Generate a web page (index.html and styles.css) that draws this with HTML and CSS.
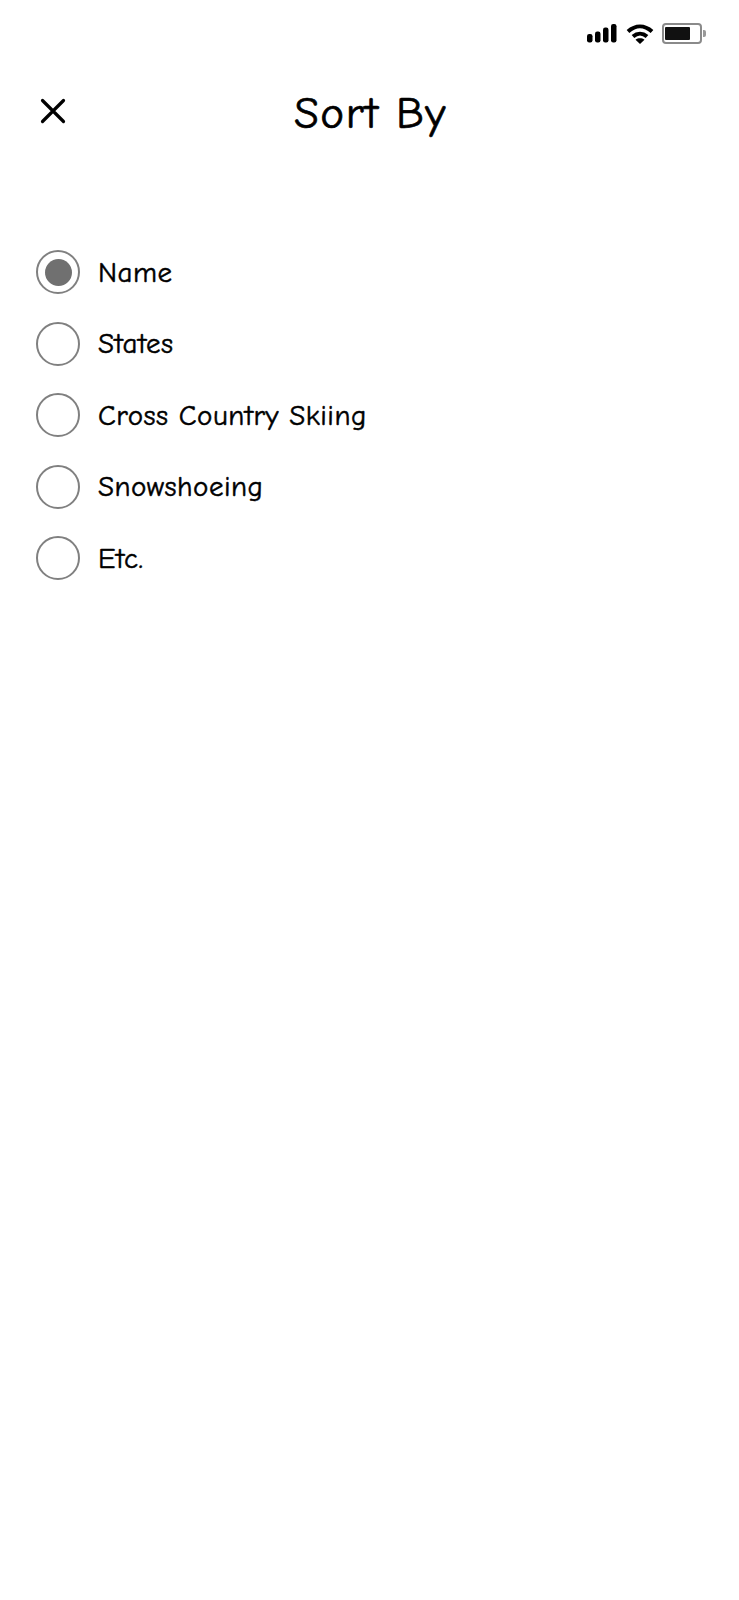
FILE: index.html
```html
<html>
	<head>
		<meta charset="utf-8">
		<link rel="stylesheet" href="styles.css">
	</head>
	<body>
		<div class="status">
			<svg class="signal" width="30" height="19" viewBox="0 0 30 19">
				<rect x="0" y="10" width="5.5" height="8.5" rx="2.2"/>
				<rect x="8" y="7.5" width="5.5" height="11" rx="2.2"/>
				<rect x="16" y="3.5" width="5.5" height="15" rx="2.2"/>
				<rect x="24" y="0" width="5.5" height="18.5" rx="2.2"/>
			</svg>
			<svg class="wifi" width="28" height="20" viewBox="0 0 28 20">
				<path d="M2 7.5C9.5 .8 18.500 .8 26 7.5" fill="none" stroke="#000" stroke-width="4"/>
				<path d="M7 12.500C11.300 8.700 16.700 8.700 21 12.500" fill="none" stroke="#000" stroke-width="4"/>
				<path d="M9.500 15.700L14 20L18.500 15.700C15.800 13.800 12.200 13.800 9.500 15.700Z"/>
			</svg>
			<div class="battery"><div class="charge"></div></div>
			<div class="nub"></div>
		</div>

		<div class="header">
			<svg class="close" width="26" height="26" viewBox="0 0 26 26">
				<path d="M2.500 2.500L23.500 23.500M23.500 2.500L2.500 23.500" fill="none" stroke="#000" stroke-width="3.2" stroke-linecap="round"/>
			</svg>
			<h1>Sort By</h1>
		</div>

		<div class="options">
			<div class="option"><span class="radio on"><span class="dot"></span></span><span class="label">Name</span></div>
			<div class="option"><span class="radio"></span><span class="label">States</span></div>
			<div class="option"><span class="radio"></span><span class="label">Cross Country Skiing</span></div>
			<div class="option"><span class="radio"></span><span class="label">Snowshoeing</span></div>
			<div class="option"><span class="radio"></span><span class="label">Etc.</span></div>
		</div>
	</body>
</html>
```

FILE: styles.css
```css
body {
	margin: 0;
	background: #fff;
	color: #000;
	font-family: "Comic Sans MS", "Comic Neue", Lato, "DejaVu Sans", sans-serif;
}

.status {
	display: flex;
	align-items: center;
	justify-content: flex-end;
	height: 21px;
	padding-top: 23px;
	padding-right: 33px;
}

.signal {
	margin-right: 9px;
}

.wifi {
	margin-right: 8px;
}

.battery {
	box-sizing: border-box;
	width: 40px;
	height: 21px;
	padding: 2px 1px;
	border: 2px solid #8a8a8a;
	border-radius: 4px;
}

.charge {
	width: 25px;
	height: 100%;
	background: #111;
	border-radius: 1px;
}

.nub {
	width: 3px;
	height: 7px;
	margin-left: 1px;
	background: #999;
	border-radius: 0 2px 2px 0;
}

.header {
	display: flex;
	align-items: center;
	height: 60px;
	margin-top: 37px;
	padding-left: 40px;
}

.close {
	flex: none;
}

h1 {
	flex: 1;
	margin: 0 0 0 -64px;
	padding-top: 3px;
	text-align: center;
	font-size: 45px;
	font-weight: 400;
	letter-spacing: 1.5px;
	-webkit-text-stroke: 0.7px #000;
}

.options {
	display: flex;
	flex-direction: column;
	gap: 27.5px;
	margin-top: 109px;
	padding-left: 36px;
}

.option {
	display: flex;
	align-items: center;
	height: 44px;
}

.radio {
	box-sizing: border-box;
	display: flex;
	align-items: center;
	justify-content: center;
	width: 44px;
	height: 44px;
	margin-right: 18px;
	border: 2px solid #808080;
	border-radius: 50%;
}

.dot {
	width: 27px;
	height: 27px;
	background: #707070;
	border-radius: 50%;
}

.label {
	font-size: 29px;
	letter-spacing: 0.5px;
	-webkit-text-stroke: 0.5px #000;
}
```
